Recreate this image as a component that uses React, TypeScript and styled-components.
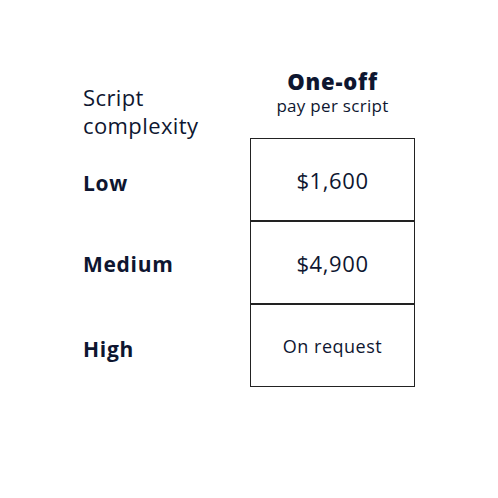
import React from "react";
import styled, { createGlobalStyle } from "styled-components";

const Global = createGlobalStyle`
  html, body { margin: 0; padding: 0; background: #fff; }
  body { font-family: "Open Sans", Lato, sans-serif; color: #0e1630; }
`;

const Page = styled.div`
  width: 498px;
  height: 498px;
  padding: 62px 0 0 83px;
  box-sizing: border-box;
`;

const Table = styled.div`
  display: grid;
  grid-template-columns: 167px 165px;
  grid-auto-rows: auto;
`;

const HeadLabel = styled.div`
  font-size: 22px;
  line-height: 28px;
  font-weight: 400;
  letter-spacing: 0.4px;
  align-self: end;
  margin-bottom: -1px;
`;

const HeadPlan = styled.div`
  display: flex;
  flex-direction: column;
  align-items: center;
  padding-top: 6px;
  padding-bottom: 21px;
`;

const PlanName = styled.div`
  font-size: 22px;
  line-height: 26px;
  font-weight: 800;
  letter-spacing: 0.8px;
`;

const PlanSub = styled.div`
  font-size: 17px;
  line-height: 22px;
  font-weight: 400;
  letter-spacing: 0.3px;
  margin-top: 1px;
`;

const RowLabel = styled.div<{ $shift?: number }>`
  display: flex;
  align-items: center;
  font-size: 21px;
  font-weight: 700;
  letter-spacing: 0.7px;
  height: 83px;
  padding-top: ${(p) => p.$shift ?? 0}px;
  box-sizing: border-box;
`;

const Cell = styled.div<{ $small?: boolean }>`
  height: 83px;
  box-sizing: border-box;
  border: 1px solid #222;
  display: flex;
  align-items: center;
  justify-content: center;
  font-size: ${(p) => (p.$small ? "18px" : "22px")};
  letter-spacing: ${(p) => (p.$small ? "0.5px" : "0.6px")};
  font-weight: 400;
`;

const rows = [
  { label: "Low", value: "$1,600", shift: 6 },
  { label: "Medium", value: "$4,900", shift: 2 },
  { label: "High", value: "On request", small: true, shift: 6 },
];

export default function App() {
  return (
    <>
      <Global />
      <Page>
        <Table>
          <HeadLabel>
            Script
            <br />
            complexity
          </HeadLabel>
          <HeadPlan>
            <PlanName>One-off</PlanName>
            <PlanSub>pay per script</PlanSub>
          </HeadPlan>
          {rows.map((r) => (
            <React.Fragment key={r.label}>
              <RowLabel $shift={r.shift}>{r.label}</RowLabel>
              <Cell $small={r.small}>{r.value}</Cell>
            </React.Fragment>
          ))}
        </Table>
      </Page>
    </>
  );
}
